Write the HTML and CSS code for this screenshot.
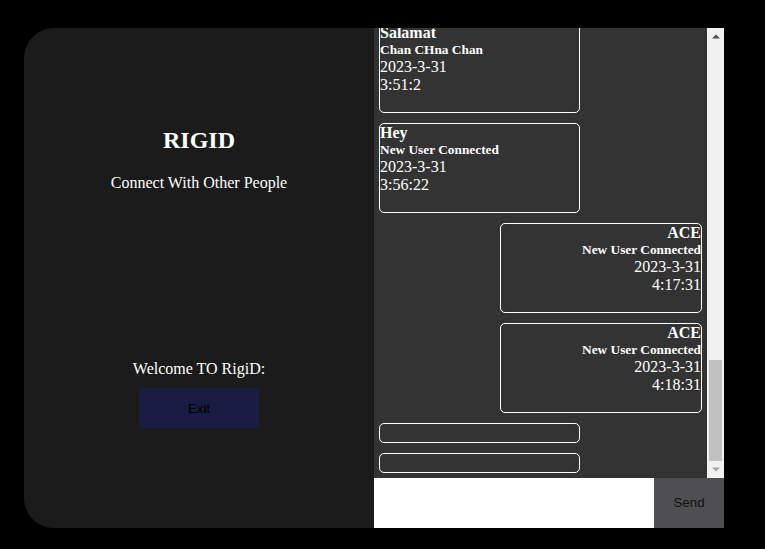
FILE: index.html
```html
<!DOCTYPE html>
<html>
<head>
<meta charset="utf-8">
<link rel="stylesheet" href="styles.css">
</head>
<body>
<div class="app">
  <div class="side">
    <h2 class="title">RIGID</h2>
    <p class="tagline">Connect With Other People</p>
    <div class="spacer"></div>
    <p class="welcome">Welcome TO RigiD:</p>
    <button class="exit">Exit</button>
  </div>
  <div class="chat">
    <div class="chat-body">
      <div class="messages">
        <div class="msg">
          <div class="name">Salamat</div>
          <div class="sub">Chan CHna Chan</div>
          <div class="date">2023-3-31</div>
          <div class="date">3:51:2</div>
        </div>
        <div class="msg">
          <div class="name">Hey</div>
          <div class="sub">New User Connected</div>
          <div class="date">2023-3-31</div>
          <div class="date">3:56:22</div>
        </div>
        <div class="msg mine">
          <div class="name">ACE</div>
          <div class="sub">New User Connected</div>
          <div class="date">2023-3-31</div>
          <div class="date">4:17:31</div>
        </div>
        <div class="msg mine">
          <div class="name">ACE</div>
          <div class="sub">New User Connected</div>
          <div class="date">2023-3-31</div>
          <div class="date">4:18:31</div>
        </div>
        <div class="msg"></div>
        <div class="msg"></div>
      </div>
      <div class="scrollbar">
        <div class="sb-btn"><svg width="8" height="5" viewBox="0 0 8 5"><polygon points="0,4.5 4,0.5 8,4.5" fill="#505050"/></svg></div>
        <div class="sb-track"><div class="sb-thumb"></div></div>
        <div class="sb-btn"><svg width="8" height="5" viewBox="0 0 8 5"><polygon points="0,0.5 8,0.5 4,4.5" fill="#a3a3a3"/></svg></div>
      </div>
    </div>
    <div class="composer">
      <input class="input" type="text">
      <button class="send">Send</button>
    </div>
  </div>
</div>
</body>
</html>
```

FILE: styles.css
```css
html, body {
  margin: 0;
  padding: 0;
  background: #000;
  width: 765px;
  height: 549px;
  overflow: hidden;
}

.app {
  margin: 28px 0 0 24px;
  width: 700px;
  height: 500px;
  display: flex;
  font-family: "Liberation Serif", "Times New Roman", serif;
  color: #fff;
}

.side {
  width: 350px;
  height: 500px;
  background: #1b1b1b;
  border-radius: 30px 0 0 30px;
  display: flex;
  flex-direction: column;
  align-items: center;
  padding-top: 98px;
  box-sizing: border-box;
}

.title {
  margin: 0;
  font-size: 24px;
  line-height: 28px;
  font-weight: bold;
}

.tagline {
  margin: 20px 0 0;
  font-size: 16px;
  line-height: 18px;
}

.spacer {
  height: 168px;
}

.welcome {
  margin: 0;
  font-size: 16px;
  line-height: 18px;
}

.exit {
  margin-top: 10px;
  width: 120px;
  height: 40px;
  border: none;
  background: #181b42;
  color: #000;
  font-family: "Liberation Sans", Arial, sans-serif;
  font-size: 13.33px;
  padding: 0;
}

.chat {
  width: 350px;
  height: 500px;
  display: flex;
  flex-direction: column;
}

.chat-body {
  height: 450px;
  display: flex;
  background: #333;
}

.messages {
  flex: 1;
  overflow: hidden;
  display: flex;
  flex-direction: column;
  justify-content: flex-end;
  gap: 10px;
  padding: 0 5px 5px;
}

.msg {
  flex: none;
  width: 199px;
  border: 1px solid #fff;
  border-radius: 5px;
  padding-bottom: 18px;
}

.msg.mine {
  align-self: flex-end;
  width: 200px;
  text-align: right;
}

.name {
  font-size: 16px;
  line-height: 18px;
  font-weight: bold;
}

.sub {
  font-size: 13.33px;
  line-height: 16px;
  font-weight: bold;
}

.date {
  font-size: 16px;
  line-height: 18px;
}

.scrollbar {
  width: 17px;
  background: #f1f1f1;
  display: flex;
  flex-direction: column;
}

.sb-btn {
  height: 17px;
  display: flex;
  align-items: center;
  justify-content: center;
}

.sb-track {
  flex: 1;
  display: flex;
  flex-direction: column;
  justify-content: flex-end;
}

.sb-thumb {
  height: 101px;
  margin: 0 2px;
  background: #c1c1c1;
}

.composer {
  height: 50px;
  display: flex;
}

.input {
  width: 280px;
  height: 50px;
  border: none;
  margin: 0;
  padding: 0;
  background: #fff;
  outline: none;
  box-sizing: border-box;
}

.send {
  width: 70px;
  height: 50px;
  border: none;
  margin: 0;
  padding: 0 0 1px;
  background: #4f4f51;
  color: #111;
  font-family: "Liberation Sans", Arial, sans-serif;
  font-size: 13.33px;
}
```
